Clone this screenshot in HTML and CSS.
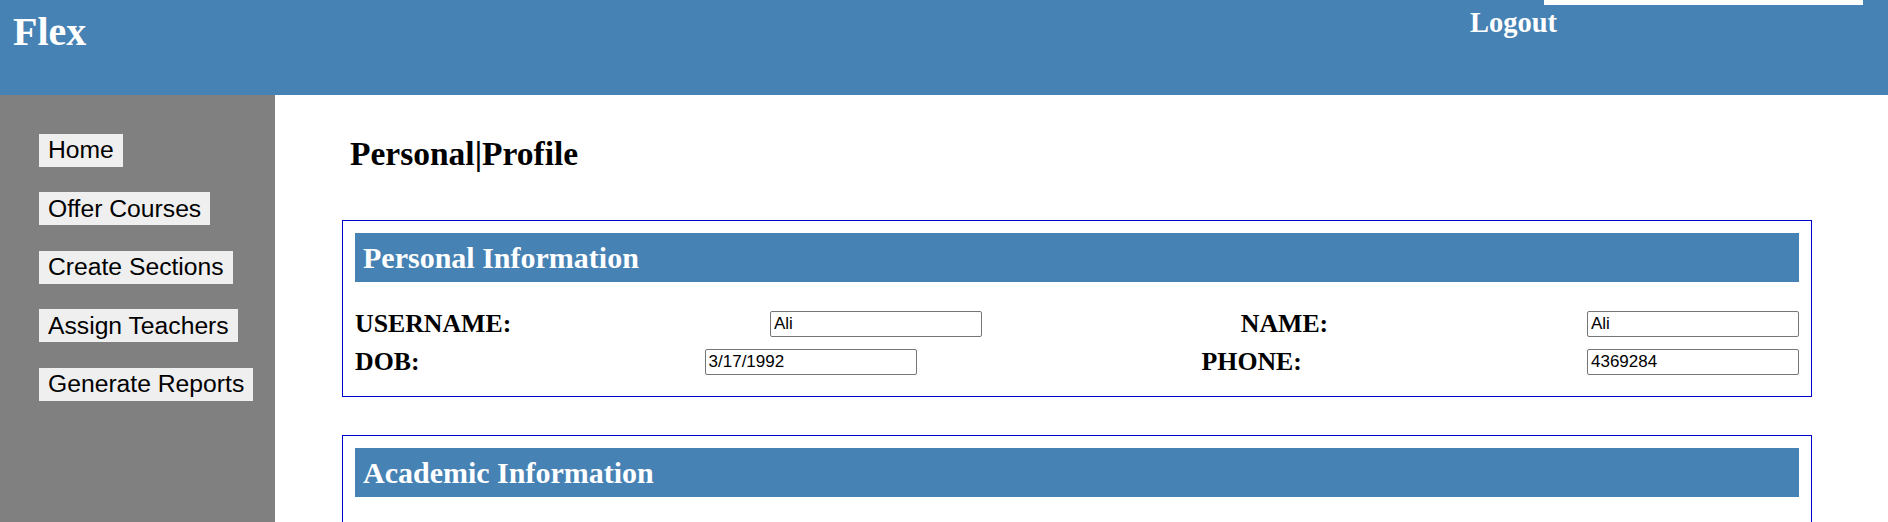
FILE: index.html
```html
<!DOCTYPE html>
<html lang="en">
<head>
<meta charset="utf-8">
<title>Flex - Personal Profile</title>
<link rel="stylesheet" href="styles.css">
</head>
<body>
  <header class="topbar">
    <div class="brand">Flex</div>
    <div class="top-right">
      <div class="search-box"></div>
      <a class="logout" href="#">Logout</a>
    </div>
  </header>
  <div class="layout">
    <nav class="sidebar">
      <button class="nav-btn" type="button">Home</button>
      <button class="nav-btn" type="button">Offer Courses</button>
      <button class="nav-btn" type="button">Create Sections</button>
      <button class="nav-btn" type="button">Assign Teachers</button>
      <button class="nav-btn" type="button">Generate Reports</button>
    </nav>
    <main class="content">
      <h2 class="page-title">Personal|Profile</h2>
      <section class="panel">
        <div class="panel-head">Personal Information</div>
        <div class="rows">
          <div class="row">
            <label class="field-label">USERNAME:</label>
            <input class="field-input" type="text" value="Ali">
            <label class="field-label">NAME:</label>
            <input class="field-input" type="text" value="Ali">
          </div>
          <div class="row">
            <label class="field-label">DOB:</label>
            <input class="field-input" type="text" value="3/17/1992">
            <label class="field-label">PHONE:</label>
            <input class="field-input" type="text" value="4369284">
          </div>
        </div>
      </section>
      <section class="panel panel-academic">
        <div class="panel-head">Academic Information</div>
      </section>
    </main>
  </div>
</body>
</html>
```
FILE: styles.css
```css
html, body {
  margin: 0;
  padding: 0;
  height: 100%;
  overflow: hidden;
}

body {
  font-family: "Liberation Serif", "Times New Roman", serif;
  display: flex;
  flex-direction: column;
  background: #ffffff;
}

.topbar {
  flex: 0 0 95px;
  height: 95px;
  background: #4682b4;
  color: #ffffff;
  display: flex;
  align-items: flex-start;
}

.brand {
  font-size: 40px;
  font-weight: bold;
  line-height: 46px;
  margin: 8.5px 0 0 13px;
}

.top-right {
  margin-left: auto;
  margin-right: 25px;
  width: 393px;
  display: flex;
  flex-direction: column;
  align-items: flex-start;
}

.search-box {
  width: 319px;
  height: 30px;
  margin-top: -25px;
  margin-left: 74px;
  background: #ffffff;
}

.logout {
  color: #ffffff;
  text-decoration: none;
  font-size: 28.5px;
  font-weight: bold;
  line-height: 32px;
  margin-top: 1.6px;
}

.layout {
  flex: 1;
  display: flex;
  min-height: 0;
}

.sidebar {
  flex: 0 0 275px;
  width: 275px;
  background: #808080;
  display: flex;
  flex-direction: column;
  align-items: flex-start;
  gap: 25.5px;
  padding: 38.5px 0 0 39px;
  box-sizing: border-box;
}

.nav-btn {
  font-family: "Liberation Sans", Arial, sans-serif;
  font-size: 24.7px;
  color: #000000;
  background: #efefef;
  border: none;
  border-radius: 0;
  height: 33px;
  padding: 0 9px;
  margin: 0;
  line-height: normal;
}

.content {
  flex: 1;
  padding-top: 40px;
}

.page-title {
  font-size: 33.5px;
  font-weight: bold;
  line-height: 38px;
  margin: 0 0 47px 75px;
  color: #000000;
}

.panel {
  width: 1470px;
  margin-left: 67px;
  border: 1px solid #0000cd;
  box-sizing: border-box;
  padding: 12px;
}

.panel-academic {
  margin-top: 38px;
  min-height: 160px;
}

.panel-head {
  background: #4682b4;
  color: #ffffff;
  font-size: 30px;
  font-weight: bold;
  line-height: 35px;
  padding: 7px 8px;
}

.rows {
  margin-top: 27px;
  padding-bottom: 7px;
  display: flex;
  flex-direction: column;
  gap: 7.5px;
}

.row {
  display: flex;
  justify-content: space-between;
  align-items: center;
  height: 30px;
}

.field-label {
  font-size: 25.8px;
  font-weight: bold;
  line-height: 30px;
  color: #000000;
}

.field-input {
  width: 212px;
  height: 26px;
  box-sizing: border-box;
  border: 1px solid #767676;
  border-radius: 2px;
  padding: 1px 3px;
  margin: 0;
  font-family: "Liberation Sans", Arial, sans-serif;
  font-size: 17px;
  color: #000000;
  background: #ffffff;
}
```
